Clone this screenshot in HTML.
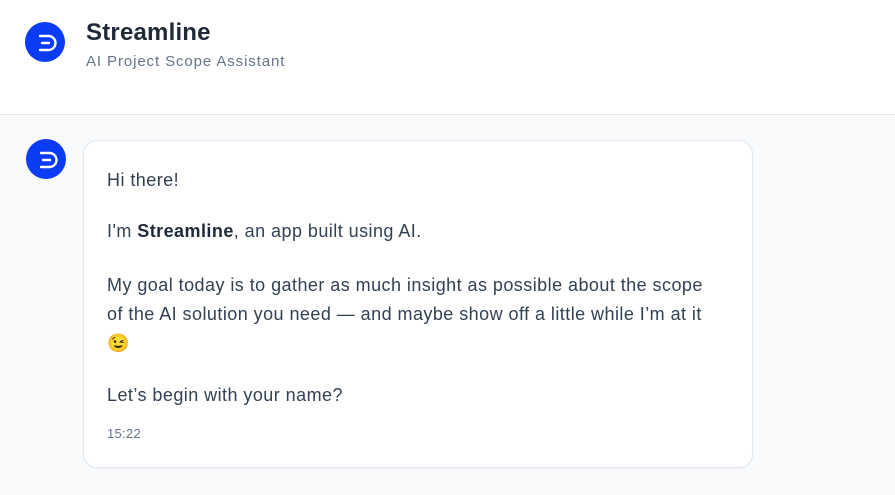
<!DOCTYPE html>
<html><head><meta charset="utf-8"><style>
*{margin:0;padding:0;box-sizing:border-box}
body{width:895px;height:495px;overflow:hidden;background:#f8fafc;font-family:"Liberation Sans",sans-serif;position:relative}
.hdr{position:absolute;left:0;top:0;width:895px;height:115px;background:#fff;border-bottom:1px solid #e5e7eb}
.logo{position:absolute;width:40px;height:40px;border-radius:50%;background:#0b3cf5}
.logo svg{position:absolute;left:0;top:0}
.t1{position:absolute;left:86px;top:19px;font-size:24px;font-weight:bold;color:#1f2937;letter-spacing:0.2px}
.t2{position:absolute;left:86px;top:53px;font-size:15px;color:#64748b;letter-spacing:0.9px}
.bub{position:absolute;left:83px;top:140px;width:670px;height:328px;background:#fff;border:1px solid #e2e8f0;border-radius:14px;box-shadow:0 1px 2px rgba(0,0,0,.04)}
.p{position:absolute;left:107px;font-size:18px;letter-spacing:0.45px;color:#334155;white-space:nowrap}
.ts{position:absolute;left:107px;top:426px;font-size:13px;color:#64748b;letter-spacing:0.3px}
</style></head><body>
<div class="hdr">
<div class="logo" style="left:25px;top:22px"><svg width="40" height="40" viewBox="0 0 40 40"><g fill="none" stroke="#fff" stroke-width="2.4" stroke-linecap="round"><path d="M15 14h8.5a7 7 0 0 1 0 14h-8.5"/><path d="M17 21h7"/></g></svg></div>
<div class="t1">Streamline</div>
<div class="t2">AI Project Scope Assistant</div>
</div>
<div class="logo" style="left:26px;top:139px"><svg width="40" height="40" viewBox="0 0 40 40"><g fill="none" stroke="#fff" stroke-width="2.4" stroke-linecap="round"><path d="M15 14h8.5a7 7 0 0 1 0 14h-8.5"/><path d="M17 21h7"/></g></svg></div>
<div class="bub"></div>
<div class="p" style="top:170px">Hi there!</div>
<div class="p" style="top:221px">I'm <b style="color:#1f2937">Streamline</b>, an app built using AI.</div>
<div class="p" style="top:275px">My goal today is to gather as much insight as possible about the scope</div>
<div class="p" style="top:304px">of the AI solution you need — and maybe show off a little while I’m at it</div>
<div class="p" style="top:333px">😉</div>
<div class="p" style="top:385px">Let’s begin with your name?</div>
<div class="ts">15:22</div>
</body></html>
